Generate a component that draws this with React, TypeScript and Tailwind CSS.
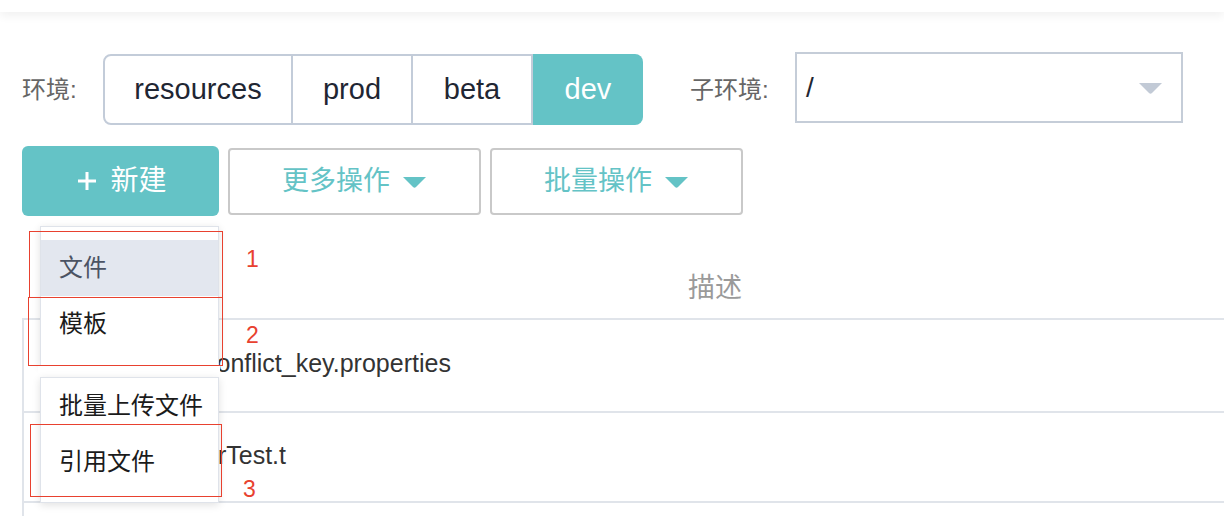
import React from "react";

const TEAL = "#64c3c6";

function Caret({ color, w = 25, h = 12 }: { color: string; w?: number; h?: number }) {
  return (
    <svg width={w} height={h} viewBox="0 0 25 12">
      <path d="M1 1 H24 L14 11 Q12.5 12.3 11 11 Z" fill={color} />
    </svg>
  );
}

function Segment({ label, className }: { label: string; className: string }) {
  return (
    <div className={`flex h-[71px] items-center justify-center text-[29px] ${className}`}>
      {label}
    </div>
  );
}

function MenuItem({ label, active }: { label: string; active?: boolean }) {
  return (
    <div
      className={`flex h-[56px] items-center pl-[18px] text-[24px] ${
        active ? "bg-[#e3e7ef] text-[#4b5363]" : "text-[#1b1b1b]"
      }`}
    >
      {label}
    </div>
  );
}

export default function App() {
  return (
    <div className="relative h-[516px] w-[1224px] overflow-hidden bg-white font-['Liberation_Sans','Noto_Sans_CJK_SC',sans-serif]">
      {/* top bar edge */}
      <div className="relative z-10 h-3 bg-white shadow-[0_4px_10px_rgba(0,0,0,0.06)]" />

      {/* environment row */}
      <div className="flex items-start pl-[22px] pt-10">
        <div className="mt-[2px] flex h-[71px] w-[81px] items-center text-[24px] text-[#666]">环境:</div>
        <div className="mt-[2px] flex text-[#1f2633]">
          <Segment label="resources" className="w-[190px] rounded-l-lg border-2 border-[#c3ccd9]" />
          <Segment label="prod" className="w-[120px] border-y-2 border-r-2 border-[#c3ccd9]" />
          <Segment label="beta" className="w-[120px] border-y-2 border-r-2 border-[#c3ccd9]" />
          <Segment label="dev" className="w-[110px] rounded-r-lg bg-[#64c3c6] text-white" />
        </div>
        <div className="ml-[47px] mt-[2px] flex h-[71px] w-[105px] items-center text-[24px] text-[#666]">子环境:</div>
        <div className="flex h-[71px] w-[388px] items-center justify-between border-2 border-[#c5cdd8] pl-[9px] pr-[18px]">
          <span className="text-[28px] font-light text-[#1f2633]">/</span>
          <Caret color="#c2cad6" />
        </div>
      </div>

      {/* action buttons */}
      <div className="mt-[21px] flex items-start pl-[22px]">
        <button className="flex h-[70px] w-[197px] items-center justify-center gap-[14px] rounded-md bg-[#64c3c6] pl-[4px] text-[28px] text-white">
          <svg width="18" height="18" viewBox="0 0 18 18">
            <path d="M9 0 V18 M0 9 H18" stroke="white" strokeWidth="3" />
          </svg>
          新建
        </button>
        <button className="ml-[9px] mt-[2px] flex h-[67px] w-[253px] items-center justify-center gap-[12px] rounded-[4px] border-2 border-[#c9c9c9] text-[27px] text-[#64c3c6]">
          更多操作
          <Caret color={TEAL} />
        </button>
        <button className="ml-[9px] mt-[2px] flex h-[67px] w-[253px] items-center justify-center gap-[12px] rounded-[4px] border-2 border-[#c9c9c9] text-[27px] text-[#64c3c6]">
          批量操作
          <Caret color={TEAL} />
        </button>
      </div>

      {/* table */}
      <div className="ml-[22px]">
        <div className="grid h-[102px] grid-cols-[666px_1fr]">
          <div />
          <div className="pt-[58px] text-[27px] leading-[28px] text-[#9a9a9a]">描述</div>
        </div>
        <div className="border-l-2 border-[#e0e4ea]">
          <div className="grid h-[93px] grid-cols-[666px_1fr] items-center border-t-2 border-[#e0e4ea] pb-[3px]">
            <div className="pl-[180px] text-[25px] text-[#333]">conflict_key.properties</div>
            <div />
          </div>
          <div className="grid h-[90px] grid-cols-[666px_1fr] items-center border-t-2 border-[#e0e4ea] pb-[2px]">
            <div className="pl-[180px] text-[25px] text-[#333]">erTest.t</div>
            <div />
          </div>
          <div className="h-[40px] border-t-2 border-[#e0e4ea]" />
        </div>
      </div>

      {/* dropdown menu */}
      <div className="absolute left-[40px] top-[226px] h-[140px] w-[179px] border border-[#dfe3ea] bg-white pt-[13px] shadow-[0_2px_8px_rgba(0,0,0,0.12)]">
        <MenuItem label="文件" active />
        <MenuItem label="模板" />
      </div>
      <div className="absolute left-[38px] top-[366px] h-[11px] w-[182px] bg-white" />
      <div className="absolute left-[40px] top-[377px] h-[126px] w-[179px] border border-[#dfe3ea] bg-white shadow-[0_2px_8px_rgba(0,0,0,0.12)]">
        <MenuItem label="批量上传文件" />
        <MenuItem label="引用文件" />
      </div>

      {/* annotations */}
      <div className="absolute left-[29px] top-[231px] h-[67px] w-[194px] border-[1.5px] border-[#e8412f]" />
      <div className="absolute left-[28px] top-[297px] h-[69px] w-[195px] border-[1.5px] border-[#e8412f]" />
      <div className="absolute left-[30px] top-[424px] h-[73px] w-[192px] border-[1.5px] border-[#e8412f]" />
      <span className="absolute left-[246px] top-[246px] text-[23px] leading-[26px] text-[#e8412f]">1</span>
      <span className="absolute left-[246px] top-[322px] text-[23px] leading-[26px] text-[#e8412f]">2</span>
      <span className="absolute left-[243px] top-[476px] text-[23px] leading-[26px] text-[#e8412f]">3</span>
    </div>
  );
}
